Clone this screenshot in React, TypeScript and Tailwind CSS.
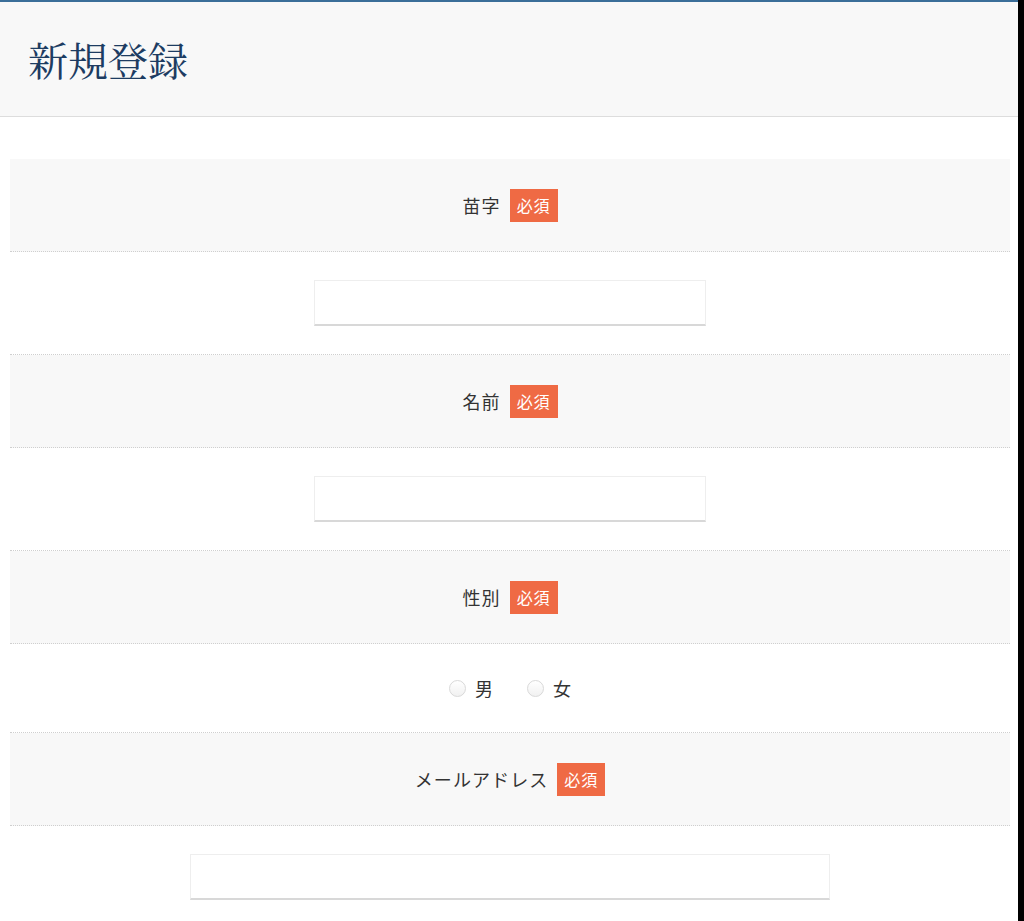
import { useState } from "react";

const sans = "font-['Noto_Sans_CJK_JP','Noto_Sans',sans-serif]";

const Badge = () => (
  <span className="ml-[9px] inline-flex h-[33px] items-center bg-[#ef6a44] px-[7px] text-[16px] tracking-[0.06em] text-white">
    必須
  </span>
);

const LabelRow = ({ label }: { label: string }) => (
  <div className="flex h-[93px] items-center justify-center border-b border-dotted border-[#cfcfcf] bg-[#f8f8f8]">
    <span className="text-[18px] tracking-[0.06em] text-[#333]">{label}</span>
    <Badge />
  </div>
);

const InputRow = ({ wide }: { wide?: boolean }) => (
  <div className="flex h-[103px] items-center justify-center border-b border-dotted border-[#cfcfcf] bg-white">
    <input
      type="text"
      className={`h-[46px] border border-[#eeeeee] border-b-2 border-b-[#d8d8d8] bg-white px-3 text-[16px] outline-none ${
        wide ? "w-[640px]" : "w-[392px]"
      }`}
    />
  </div>
);

export default function App() {
  const [gender, setGender] = useState<string | null>(null);

  return (
    <div className={`flex min-h-[921px] w-[1024px] bg-black ${sans}`}>
      <div className="w-[1018px] bg-white">
        <header className="flex h-[117px] items-center border-t-2 border-b border-t-[#3b6e99] border-b-[#dddddd] bg-[#f8f8f8] pl-[28px]">
          <h1 className="text-[40px] leading-none text-[#1d3c62] font-['Noto_Serif_CJK_JP','Liberation_Serif','Noto_Sans_CJK_JP',serif]">
            新規登録
          </h1>
        </header>

        <form className="pt-[42px] pl-[10px] pr-[8px]">
          <LabelRow label="苗字" />
          <InputRow />
          <LabelRow label="名前" />
          <InputRow />
          <LabelRow label="性別" />
          <div className="flex h-[89px] items-center justify-center gap-[34px] border-b border-dotted border-[#cfcfcf] bg-white">
            {["男", "女"].map((g) => (
              <label key={g} className="flex cursor-pointer items-center gap-[9px] text-[18px] text-[#333]">
                <input
                  type="radio"
                  name="gender"
                  className="h-[17px] w-[17px] appearance-none rounded-full border border-[#d9d9d9] bg-gradient-to-b from-white to-[#f1f1f1] checked:border-[5px] checked:border-[#3b6e99]"
                  checked={gender === g}
                  onChange={() => setGender(g)}
                />
                {g}
              </label>
            ))}
          </div>
          <LabelRow label="メールアドレス" />
          <InputRow wide />
        </form>
      </div>
    </div>
  );
}
